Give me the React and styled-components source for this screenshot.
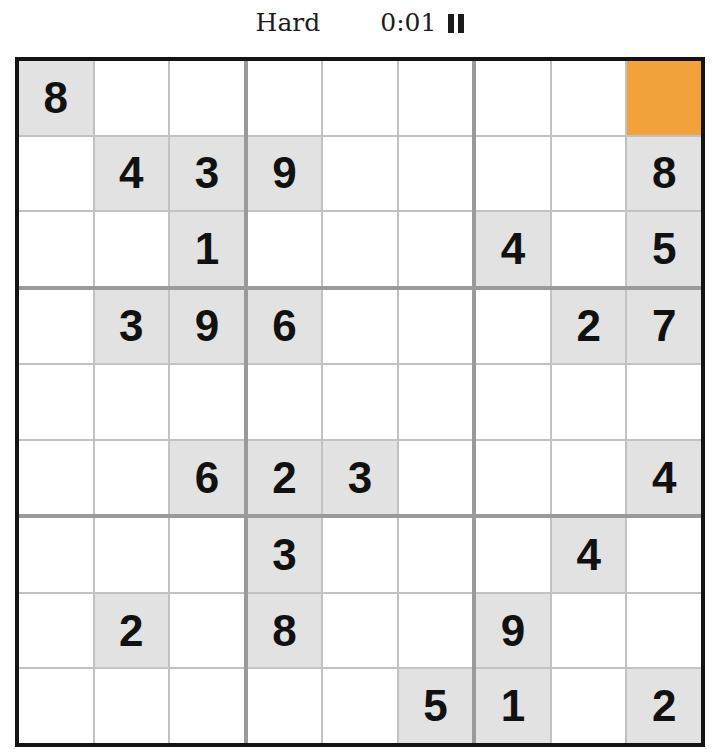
import React from "react";
import styled, { createGlobalStyle } from "styled-components";

const Global = createGlobalStyle`
  html, body { margin: 0; padding: 0; background: #fff; }
  body { font-family: "Liberation Sans", Arial, sans-serif; }
`;

const Page = styled.div`
  width: 720px;
  display: flex;
  flex-direction: column;
  align-items: center;
`;

const Header = styled.div`
  height: 45px;
  margin-bottom: 12px;
  display: flex;
  align-items: center;
  justify-content: center;
  gap: 60px;
  font-family: "DejaVu Serif", "Liberation Serif", serif;
  font-size: 25px;
  color: #1c1c1c;
`;

const Level = styled.span`
  line-height: 1;
`;

const Timer = styled.div`
  display: flex;
  align-items: center;
  gap: 12px;
`;

const Time = styled.span`
  line-height: 1;
`;

const PauseButton = styled.span`
  display: flex;
  gap: 4px;
  height: 19px;
  margin-top: 1px;
`;

const PauseBar = styled.span`
  width: 6px;
  height: 100%;
  background: #1a1a1a;
`;

const Board = styled.div`
  width: 690px;
  height: 690px;
  box-sizing: border-box;
  border: 4px solid #141414;
  background: #9a9a9a;
  display: grid;
  grid-template-columns: repeat(3, 1fr);
  grid-template-rows: repeat(3, 1fr);
  gap: 4px;
`;

const Box = styled.div`
  display: grid;
  grid-template-columns: repeat(3, 1fr);
  grid-template-rows: repeat(3, 1fr);
  gap: 2px;
  background: #c2c2c2;
`;

const Cell = styled.div`
  display: flex;
  align-items: center;
  justify-content: center;
  background: ${(p) => (p.$selected ? "#f1a23b" : p.$given ? "#e2e2e2" : "#ffffff")};
  font-family: "Liberation Sans", Arial, sans-serif;
  font-weight: 700;
  font-size: 44px;
  color: #111;
  line-height: 1;
`;

const puzzle = [
  "8........",
  ".439....8",
  "..1...4.5",
  ".396...27",
  ".........",
  "..623...4",
  "...3...4.",
  ".2.8..9..",
  ".....51.2",
];

export default function App() {
  const boxes = [];
  for (let b = 0; b < 9; b++) {
    const br = Math.floor(b / 3) * 3;
    const bc = (b % 3) * 3;
    const cells = [];
    for (let i = 0; i < 9; i++) {
      const r = br + Math.floor(i / 3);
      const c = bc + (i % 3);
      const ch = puzzle[r][c];
      const selected = r === 0 && c === 8;
      cells.push(
        <Cell key={i} $given={ch !== "."} $selected={selected}>
          {ch !== "." ? ch : ""}
        </Cell>
      );
    }
    boxes.push(<Box key={b}>{cells}</Box>);
  }
  return (
    <>
      <Global />
      <Page>
        <Header>
          <Level>Hard</Level>
          <Timer>
            <Time>0:01</Time>
            <PauseButton>
              <PauseBar />
              <PauseBar />
            </PauseButton>
          </Timer>
        </Header>
        <Board>{boxes}</Board>
      </Page>
    </>
  );
}
